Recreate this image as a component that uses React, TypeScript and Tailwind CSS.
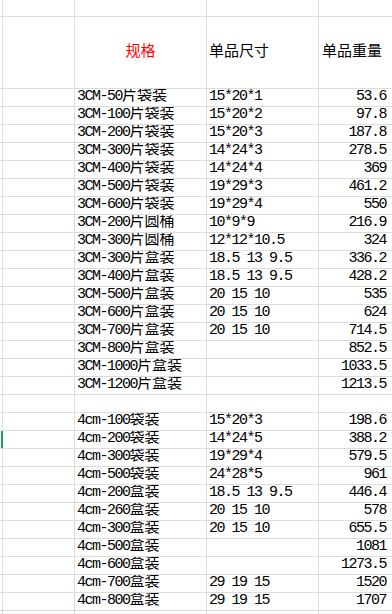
import React from 'react'

// rows: [规格, 单品尺寸, 单品重量]
const rows: [string, string, string][] = [
  ['3CM-50片袋装', '15*20*1', '53.6'],
  ['3CM-100片袋装', '15*20*2', '97.8'],
  ['3CM-200片袋装', '15*20*3', '187.8'],
  ['3CM-300片袋装', '14*24*3', '278.5'],
  ['3CM-400片袋装', '14*24*4', '369'],
  ['3CM-500片袋装', '19*29*3', '461.2'],
  ['3CM-600片袋装', '19*29*4', '550'],
  ['3CM-200片圆桶', '10*9*9', '216.9'],
  ['3CM-300片圆桶', '12*12*10.5', '324'],
  ['3CM-300片盒装', '18.5 13 9.5', '336.2'],
  ['3CM-400片盒装', '18.5 13 9.5', '428.2'],
  ['3CM-500片盒装', '20 15 10', '535'],
  ['3CM-600片盒装', '20 15 10', '624'],
  ['3CM-700片盒装', '20 15 10', '714.5'],
  ['3CM-800片盒装', '', '852.5'],
  ['3CM-1000片盒装', '', '1033.5'],
  ['3CM-1200片盒装', '', '1213.5'],
  ['', '', ''],
  ['4cm-100袋装', '15*20*3', '198.6'],
  ['4cm-200袋装', '14*24*5', '388.2'],
  ['4cm-300袋装', '19*29*4', '579.5'],
  ['4cm-500袋装', '24*28*5', '961'],
  ['4cm-200盒装', '18.5 13 9.5', '446.4'],
  ['4cm-260盒装', '20 15 10', '578'],
  ['4cm-300盒装', '20 15 10', '655.5'],
  ['4cm-500盒装', '', '1081'],
  ['4cm-600盒装', '', '1273.5'],
  ['4cm-700盒装', '29 19 15', '1520'],
  ['4cm-800盒装', '29 19 15', '1707'],
  ['', '', ''],
]

// latin runs get squeezed to half-width, CJK stays full width
function Txt({ s }: { s: string }) {
  const parts = s.split(/([\u4e00-\u9fff]+)/).filter(Boolean)
  return (
    <>
      {parts.map((p, i) =>
        /[\u4e00-\u9fff]/.test(p) ? (
          <span key={i} className="tracking-normal">{p}</span>
        ) : (
          <span key={i} className="tracking-[-1.5px]">{p}</span>
        )
      )}
    </>
  )
}

const cell = 'border-r border-b border-[#dcdcdc] overflow-hidden whitespace-nowrap'

export default function App() {
  return (
    <div className="relative w-[392px] h-[614px] overflow-hidden bg-white text-black text-[15px] font-['Liberation_Mono','Noto_Sans_CJK_SC',monospace]">
      {/* last column runs past the visible edge, like the cropped sheet */}
      <div className="grid w-[399px] grid-cols-[3px_72px_132px_112px_80px]">
        {/* top blank row */}
        <div className={`${cell} h-[17px]`} />
        <div className={`${cell} h-[17px]`} />
        <div className={`${cell} h-[17px]`} />
        <div className={`${cell} h-[17px]`} />
        <div className={`${cell} h-[17px]`} />

        {/* header */}
        <div className={`${cell} h-[72px]`} />
        <div className={`${cell} h-[72px]`} />
        <div className={`${cell} h-[72px] flex items-center justify-center text-[#ff0000] pt-[1px]`}>规格</div>
        <div className={`${cell} h-[72px] flex items-center pl-[2px] pt-[1px]`}>单品尺寸</div>
        <div className={`${cell} h-[72px] flex items-center pl-[3px] pt-[1px]`}>单品重量</div>

        {rows.map((r, i) => (
          <React.Fragment key={i}>
            <div className={`${cell} h-[18px]`} />
            <div className={`${cell} h-[18px]`} />
            <div className={`${cell} h-[18px] flex items-center pl-[2px]`}>
              <Txt s={r[0]} />
            </div>
            <div className={`${cell} h-[18px] flex items-center pl-[2px]`}>
              <Txt s={r[1]} />
            </div>
            <div className={`${cell} h-[18px] flex items-center justify-end pr-[12px]`}>
              <Txt s={r[2]} />
            </div>
          </React.Fragment>
        ))}
      </div>

      {/* active row marker */}
      <div className="absolute left-[1px] top-[431px] w-[2px] h-[17px] bg-[#1f9d55]" />
    </div>
  )
}
